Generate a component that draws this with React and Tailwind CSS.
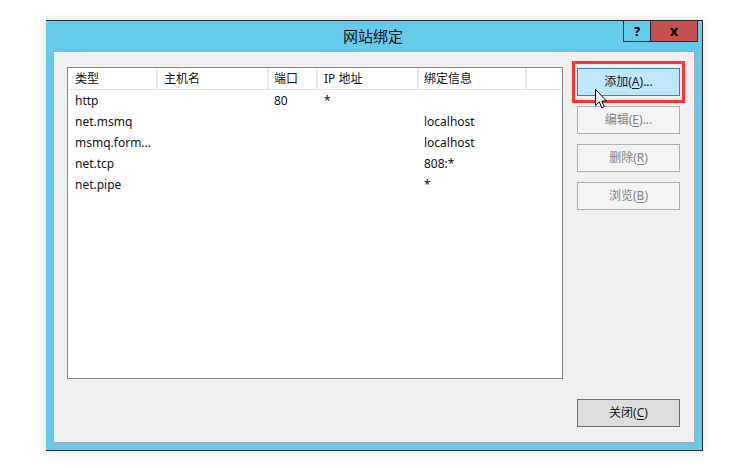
import React from "react";

const font = { fontFamily: '"Noto Sans", "Noto Sans CJK SC", sans-serif' };

const cols = [
  { w: "w-[90px]", pl: "pl-[7px]", label: "类型" },
  { w: "w-[111px]", pl: "pl-[6px]", label: "主机名" },
  { w: "w-[49px]", pl: "pl-[5px]", label: "端口" },
  { w: "w-[101px]", pl: "pl-[6px]", label: "IP 地址" },
  { w: "w-[108px]", pl: "pl-[5px]", label: "绑定信息" },
];

const rows = [
  ["http", "", "80", "*", ""],
  ["net.msmq", "", "", "", "localhost"],
  ["msmq.form...", "", "", "", "localhost"],
  ["net.tcp", "", "", "", "808:*"],
  ["net.pipe", "", "", "", "*"],
];

function Btn({ label, k, rest, disabled, primary }) {
  const cls = primary
    ? "bg-[#BEE6FD] border-[#3C7FB1] text-[#1a1a1a]"
    : disabled
    ? "bg-[#F4F4F4] border-[#ADB2B5] text-[#838383]"
    : "bg-[#DDDDDD] border-[#707070] text-[#1a1a1a]";
  return (
    <div
      className={`w-[103px] h-[28px] border flex items-center justify-center text-[12px] ${cls}`}
    >
      <span>
        {label}(<span className="underline underline-offset-2">{k}</span>){rest}
      </span>
    </div>
  );
}

export default function App() {
  return (
    <div className="w-[752px] h-[468px] bg-white pt-[20px] pl-[46px]" style={font}>
      <div className="relative w-[657px] h-[431px] bg-[#66CBEA] border-t border-r border-b border-[#2b2b2b] shadow-[0_0_10px_rgba(0,0,0,0.14)] flex flex-col">
        {/* title bar */}
        <div className="h-[30px] flex items-center justify-center text-[15px] text-[#111] pr-[2px]">
          网站绑定
        </div>
        <div className="absolute top-0 right-[4px] flex">
          <div className="w-[28px] h-[21px] border border-t-0 border-[#2b2b2b] flex items-center justify-center text-[13px] font-bold text-black leading-none">
            ?
          </div>
          <div className="w-[47px] h-[21px] bg-[#C75050] border border-l-0 border-t-0 border-[#2b2b2b] flex items-center justify-center text-[14px] font-bold text-black leading-none pb-[1px]">
            x
          </div>
        </div>

        {/* client */}
        <div className="flex-1 mx-[7px] mb-[7px] bg-[#F0F0F0] border border-[#ABABAB] flex">
          <div className="ml-[13px] mt-[15px] w-[496px] h-[312px] bg-white border border-[#828790] text-[12px] text-[#111]">
            <div className="flex h-[22px] border-b border-[#E2E2E2]">
              {cols.map((c) => (
                <div
                  key={c.label}
                  className={`${c.w} ${c.pl} h-full border-r-2 border-[#E8E8E8] flex items-center`}
                >
                  {c.label}
                </div>
              ))}
            </div>
            {rows.map((r, i) => (
              <div key={i} className="flex h-[21px]">
                {r.map((v, j) => (
                  <div key={j} className={`${cols[j].w} ${cols[j].pl} h-full flex items-center whitespace-nowrap`}>
                    {v}
                  </div>
                ))}
              </div>
            ))}
          </div>

          <div className="ml-[14px] pt-[16px] pb-[15px] flex flex-col">
            <div className="relative">
              <Btn label="添加" k="A" rest="..." primary />
              <div className="absolute -left-[5px] -top-[7px] w-[113px] h-[42px] border-[3px] border-[#FF3434]" />
            </div>
            <div className="mt-[10px]">
              <Btn label="编辑" k="E" rest="..." disabled />
            </div>
            <div className="mt-[10px]">
              <Btn label="删除" k="R" rest="" disabled />
            </div>
            <div className="mt-[10px]">
              <Btn label="浏览" k="B" rest="" disabled />
            </div>
            <div className="mt-auto">
              <Btn label="关闭" k="C" rest="" />
            </div>
          </div>
        </div>

        {/* mouse cursor */}
        <svg
          className="absolute left-[549px] top-[68px]"
          width="13"
          height="21"
          viewBox="0 0 13 21"
        >
          <path
            d="M0.5 0.5 L0.5 16.5 L4.3 12.8 L6.8 18.8 L9.2 17.8 L6.8 12 L11.5 12 Z"
            fill="white"
            stroke="black"
            strokeWidth="1"
            strokeLinejoin="miter"
          />
        </svg>
      </div>
    </div>
  );
}
